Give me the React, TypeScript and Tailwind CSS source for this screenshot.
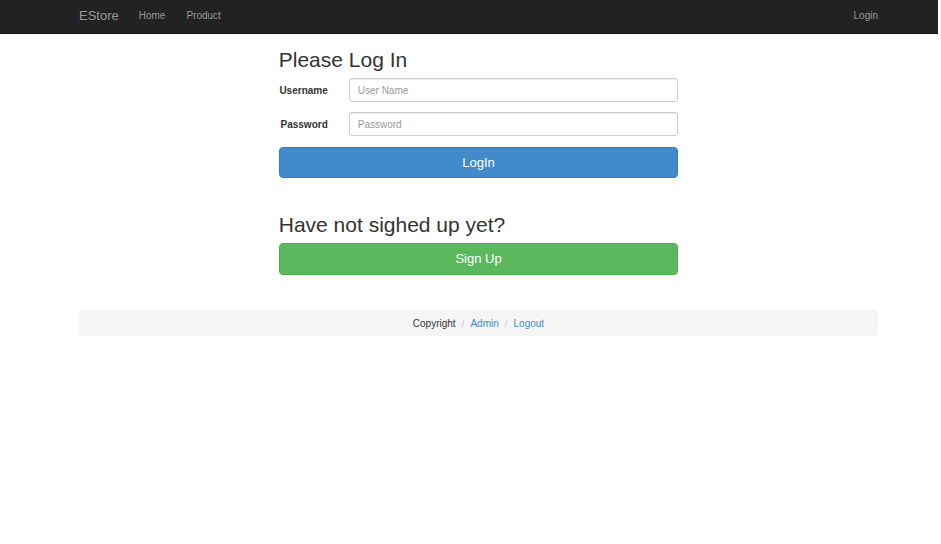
import React from "react";

function Navbar() {
  return (
    <nav className="h-[34px] border-b border-[#161216] bg-[#222222] pr-[60px] pl-[79px] text-[#999999]">
      <div className="flex h-8 items-center leading-4">
        <a href="#" className="text-[13px]">EStore</a>
        <div className="ml-5 flex gap-[21px] text-[10px]">
          <a href="#home">Home</a>
          <a href="#product">Product</a>
        </div>
        <a href="#login" className="ml-auto text-[10px]">Login</a>
      </div>
    </nav>
  );
}

type FieldProps = {
  id: string;
  label: string;
  placeholder: string;
  type: string;
};

function Field({ id, label, placeholder, type }: FieldProps) {
  return (
    <div className="flex items-center">
      <label htmlFor={id} className="w-[49px] text-right text-[10px] font-bold">
        {label}
      </label>
      <input
        id={id}
        type={type}
        placeholder={placeholder}
        className="ml-[21px] h-6 min-w-0 flex-1 rounded-[3px] border border-[#cccccc] bg-white px-2 text-[10px] shadow-[inset_0_1px_1px_rgba(0,0,0,0.075)] outline-none placeholder:text-[#999999] focus:border-[#66afe9]"
      />
    </div>
  );
}

export default function App() {
  return (
    <div className="mr-[3px] font-['Liberation_Sans',Arial,sans-serif] text-[#333333]">
      <Navbar />
      <div className="pr-[60px] pl-[79px]">
        <main className="mx-auto w-1/2 pt-3">
          <form onSubmit={(event) => event.preventDefault()}>
            <h2 className="mb-1 text-[21px] leading-7">Please Log In</h2>
            <div className="flex flex-col gap-[10px]">
              <Field id="username" label="Username" placeholder="User Name" type="text" />
              <Field id="password" label="Password" placeholder="Password" type="password" />
            </div>
            <button
              type="submit"
              className="mt-[11px] h-[31px] w-full rounded-[4px] border border-[#357ebd] bg-[#428bca] text-[13px] text-white"
            >
              LogIn
            </button>
          </form>
          <section className="mt-[33px]">
            <h2 className="mb-1 text-[21px] leading-7">Have not sighed up yet?</h2>
            <button
              type="button"
              className="h-8 w-full rounded-[4px] border border-[#4cae4c] bg-[#5cb85c] text-[13px] text-white"
            >
              Sign Up
            </button>
          </section>
        </main>
        <footer className="mt-[35px] flex h-[26px] items-center justify-center rounded-[3px] bg-[#f5f5f5] text-[10px]">
          <span>Copyright</span>
          <span className="px-[6px] text-[#cccccc]">/</span>
          <a href="#admin" className="text-[#428bca]">Admin</a>
          <span className="px-[6px] text-[#cccccc]">/</span>
          <a href="#logout" className="text-[#428bca]">Logout</a>
        </footer>
      </div>
    </div>
  );
}
